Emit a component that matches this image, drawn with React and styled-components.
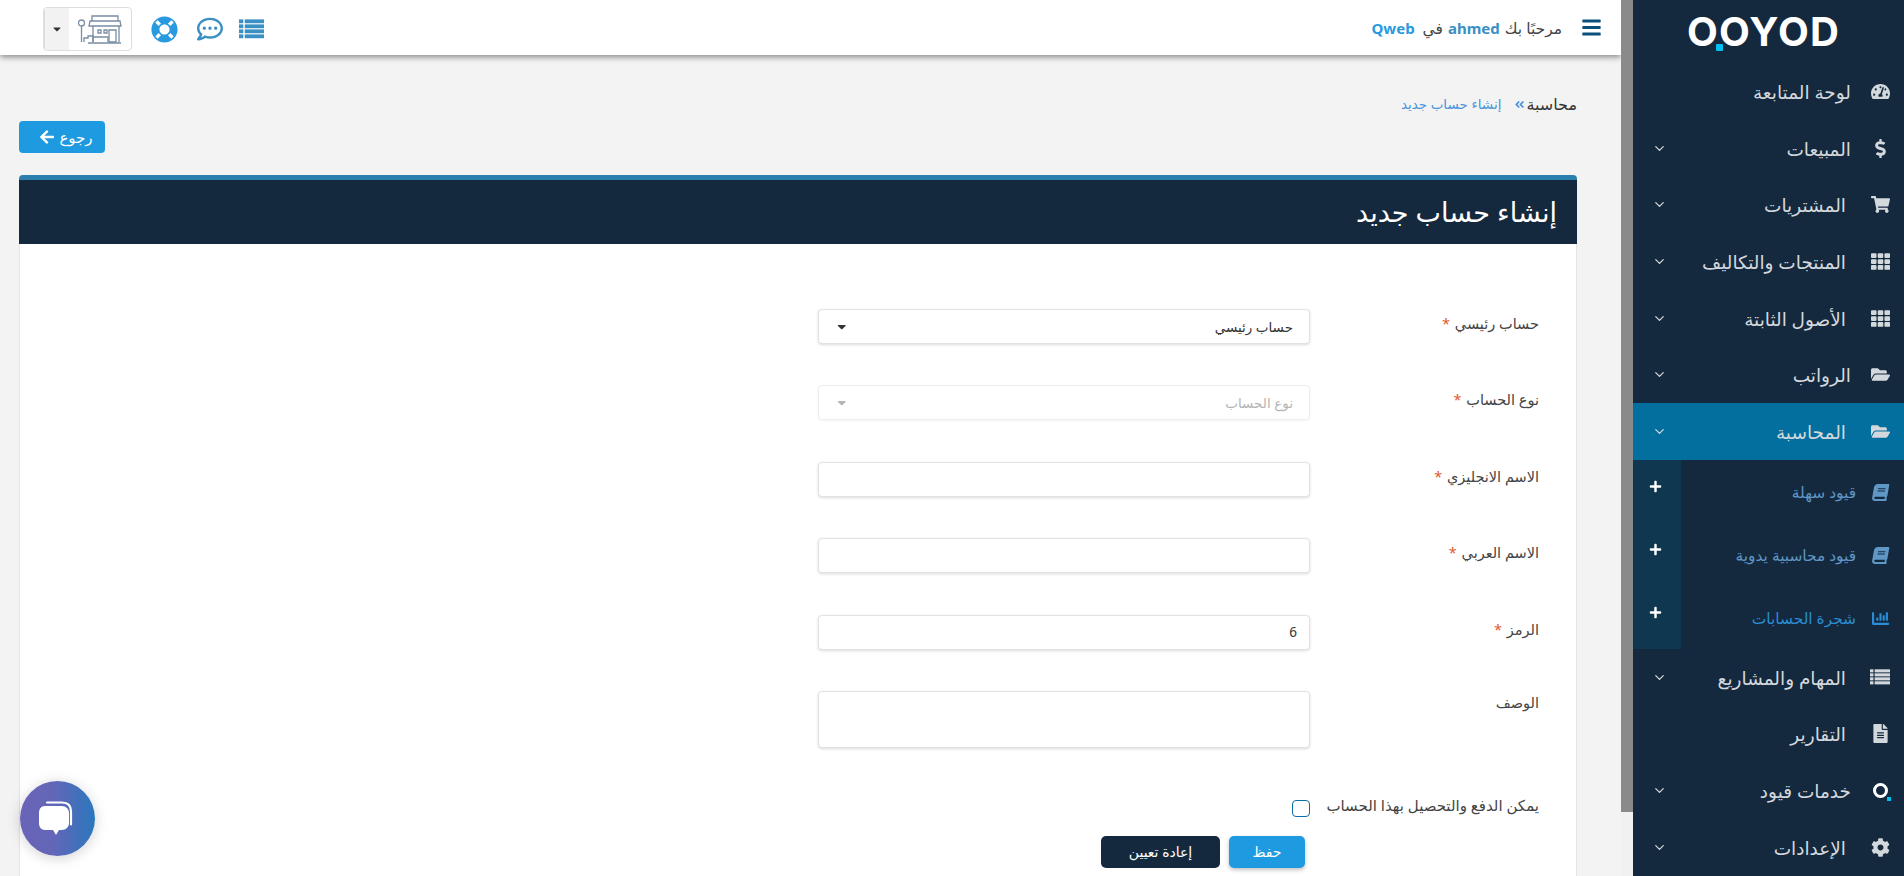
import React from "react";
import styled, { createGlobalStyle } from "styled-components";
import {
  FaTachometerAlt, FaDollarSign, FaShoppingCart, FaTh, FaFolderOpen, FaBook, FaChartBar,
  FaFileAlt, FaCog, FaPlus, FaBars, FaLifeRing, FaRegCommentDots, FaArrowLeft,
  FaAngleDoubleRight, FaCaretDown,
} from "react-icons/fa";
import { FiChevronDown } from "react-icons/fi";

const FONT = `"Noto Sans", "Open Sans", "DejaVu Sans", sans-serif`;

const Global = createGlobalStyle`
  html, body { margin: 0; padding: 0; height: 876px; overflow: hidden; background: #f3f3f3; }
  body { font-family: ${FONT}; color: #333; }
  * { box-sizing: border-box; }
`;

const Page = styled.div`
  display: flex;
  width: 1904px;
  height: 876px;
  overflow: hidden;
`;

const Sidebar = styled.aside`
  width: 271px;
  flex: none;
  background: #15293e;
  color: #d3d8dd;
`;

const Logo = styled.div`
  position: relative;
  height: 63px;
  display: flex;
  align-items: flex-start;
  justify-content: flex-start;
  padding: 9px 0 0 54px;
  direction: ltr;
  font: 700 40px/46px Inter, sans-serif;
  letter-spacing: 1.2px;
  color: #fff;
`;

const LogoDot = styled.span`
  position: absolute;
  left: 83px;
  top: 44px;
  width: 7px;
  height: 7px;
  border-radius: 1px;
  background: #00c2f0;
`;

const Row = styled.div`
  height: 56.7px;
  display: flex;
  align-items: center;
  padding: 0 14px 0 19px;
  font-size: 18.5px;
  background: ${(p) => (p.$active ? "#026f9f" : "transparent")};
`;

const RowIcon = styled.span`
  width: 20px;
  flex: none;
  display: flex;
  justify-content: center;
  margin-left: ${(p) => (p.$wide ? 24 : 19)}px;
  font-size: 19px;
  color: #d3d8dd;
`;

const RowLabel = styled.span`
  flex: 1;
  white-space: nowrap;
`;

const Chevron = styled(FiChevronDown)`
  font-size: 15px;
  color: #d3d8dd;
`;

const QMark = styled.span`
  position: relative;
  width: 15px;
  height: 15px;
  border: 3.5px solid #fff;
  border-radius: 50%;
  display: block;
  &::after {
    content: "";
    position: absolute;
    right: -6px;
    bottom: -6px;
    width: 4px;
    height: 4px;
    background: #00c2f0;
  }
`;

const SubMenu = styled.div`
  display: flex;
  flex-direction: column;
`;

const SubRow = styled.div`
  height: 63px;
  display: flex;
  padding-right: 14px;
  color: ${(p) => (p.$current ? "#2a8ed6" : "#5f97c6")};
  font-size: 15.4px;
`;

const SubIcon = styled.span`
  width: 20px;
  flex: none;
  margin-left: 14px;
  padding-top: 24px;
  font-size: 17px;
  display: flex;
  justify-content: center;
  align-items: flex-start;
`;

const SlantBook = styled(FaBook)`
  transform: skewX(-10deg);
`;

const SubLabel = styled.span`
  flex: 1;
  padding-top: 22px;
  white-space: nowrap;
`;

const PlusCell = styled.span`
  width: 48px;
  flex: none;
  background: #103750;
  color: #fff;
  display: flex;
  justify-content: center;
  padding: 20px 4px 0 0;
  font-size: 13px;
`;

const ScrollTrack = styled.div`
  width: 12px;
  flex: none;
  background: #f1f1f1;
`;

const ScrollThumb = styled.div`
  height: 812px;
  background: #8a8a8a;
`;

const Main = styled.main`
  flex: 1;
  min-width: 0;
  display: flex;
  flex-direction: column;
  overflow: hidden;
`;

const TopBar = styled.header`
  height: 55px;
  flex: none;
  background: #fff;
  box-shadow: 0 2px 6px rgba(0, 0, 0, 0.45);
  display: flex;
  align-items: center;
  justify-content: space-between;
  padding: 0 19px 0 43px;
  position: relative;
`;

const Welcome = styled.div`
  display: flex;
  align-items: center;
  gap: 19px;
`;

const Burger = styled(FaBars)`
  font-size: 21px;
  color: #0b5078;
`;

const WelcomeText = styled.div`
  font-size: 15.5px;
  color: #444;
  white-space: nowrap;
  display: flex;
  gap: 5px;
  align-items: baseline;
`;

const Strong = styled.b`
  color: ${(p) => p.$c};
  font-weight: 700;
  font-size: 15px;
  margin: 0 ${(p) => p.$m || 0}px;
`;

const Tools = styled.div`
  display: flex;
  align-items: center;
  gap: 19px;
  flex-direction: row-reverse;
  margin-top: 3px;
`;

const ToolIcon = styled.span`
  display: flex;
  font-size: ${(p) => p.$size}px;
  color: ${(p) => p.$c};
  margin-left: ${(p) => p.$pull || 0}px;
`;

const StoreSwitch = styled.div`
  width: 89px;
  height: 44px;
  border: 1px solid #ddd;
  border-radius: 4px;
  background: #fff;
  display: flex;
  flex-direction: row-reverse;
  overflow: hidden;
`;

const CaretBox = styled.span`
  width: 25px;
  background: #f2f2f2;
  border-left: 1px solid #ddd;
  display: flex;
  align-items: center;
  justify-content: center;
  font-size: 12px;
  color: #333;
`;

const StoreBox = styled.span`
  flex: 1;
  display: flex;
  align-items: center;
  justify-content: center;
`;

const Content = styled.div`
  flex: 1;
  padding: 39px 44px 0 19px;
  display: flex;
  flex-direction: column;
  min-height: 0;
`;

const Crumbs = styled.nav`
  height: 20px;
  display: flex;
  align-items: center;
  font-size: 16px;
  color: #333;
  gap: 1px;
`;

const CrumbLink = styled.span`
  color: #4a94dc;
  margin-right: 12px;
  font-size: 13.5px;
`;

const CrumbSep = styled(FaAngleDoubleRight)`
  color: #4a94dc;
  font-size: 11px;
  transform: rotate(180deg);
`;

const BackRow = styled.div`
  display: flex;
  justify-content: flex-end;
  margin-top: 7px;
  height: 32px;
`;

const BackButton = styled.button`
  width: 86px;
  height: 32px;
  border: 0;
  border-radius: 4px;
  background: #1e9be0;
  color: #fff;
  font: 15px ${FONT};
  display: flex;
  align-items: center;
  justify-content: center;
  gap: 4px;
  padding: 0 0 0 8px;
  svg {
    font-size: 16px;
  }
`;

const Card = styled.section`
  margin-top: 22px;
  flex: 1;
  display: flex;
  flex-direction: column;
  background: #fff;
  border-radius: 4px 4px 0 0;
  border-top: 5px solid #2a7fae;
  overflow: hidden;
`;

const CardHead = styled.h1`
  margin: 0;
  height: 64px;
  flex: none;
  background: #15293e;
  color: #fff;
  font-size: 27px;
  font-weight: 400;
  line-height: 64px;
  padding-right: 20px;
`;

const Form = styled.form`
  flex: 1;
  padding-top: 65px;
  border-left: 1px solid #e4e4e4;
  border-right: 1px solid #e4e4e4;
`;

const FormRow = styled.div`
  display: flex;
  min-height: 35px;
  margin-bottom: ${(p) => p.$mb ?? 41.4}px;
`;

const Label = styled.label`
  width: 266px;
  flex: none;
  padding: ${(p) => p.$pt ?? 4}px 37px 0 0;
  font-size: 14.5px;
  color: #444;
  white-space: nowrap;
`;

const Req = styled.span`
  color: #e2572f;
  margin-right: 1px;
`;

const SelectBox = styled.div`
  width: 492px;
  height: 35px;
  border: 1px solid ${(p) => (p.$disabled ? "#eee" : "#e2e2e2")};
  border-radius: 4px;
  box-shadow: 0 1px 3px rgba(0, 0, 0, ${(p) => (p.$disabled ? 0.05 : 0.14)});
  padding: 0 16px;
  display: flex;
  align-items: center;
  justify-content: space-between;
  font-size: 13.5px;
  color: ${(p) => (p.$disabled ? "#b5b5b5" : "#333")};
  background: #fff;
`;

const Input = styled.input`
  width: 492px;
  height: 35px;
  border: 1px solid #e2e2e2;
  border-radius: 4px;
  box-shadow: 0 1px 3px rgba(0, 0, 0, 0.14);
  padding: 0 16px 0 12px;
  padding-right: 12px;
  font: 13.5px ${FONT};
  color: #333;
  outline: 0;
  background: #fff;
`;

const TextArea = styled.textarea`
  width: 492px;
  height: 57px;
  border: 1px solid #e2e2e2;
  border-radius: 4px;
  box-shadow: 0 1px 3px rgba(0, 0, 0, 0.14);
  resize: none;
  outline: 0;
  display: block;
`;

const CheckRow = styled.div`
  display: flex;
  height: 22px;
  margin-top: 47px;
  padding-right: 37px;
  justify-content: flex-start;
`;

const CheckLabel = styled.label`
  width: 229px;
  font-size: 15px;
  color: #444;
  white-space: nowrap;
`;

const Check = styled.input`
  appearance: none;
  width: 18px;
  height: 17px;
  border: 1px solid #0b6ea6;
  border-radius: 4px;
  margin: 5px 0 0;
  background: #fff;
`;

const Actions = styled.div`
  display: flex;
  gap: 9px;
  margin-top: 19px;
  padding-right: 271px;
`;

const ActionButton = styled.button`
  height: 32px;
  width: ${(p) => p.$w}px;
  border: 0;
  border-radius: 5px;
  background: ${(p) => p.$bg};
  color: #fff;
  font: 14px ${FONT};
  box-shadow: ${(p) => (p.$shadow ? "0 2px 4px rgba(0,0,0,.25)" : "none")};
`;

const ChatFab = styled.div`
  position: fixed;
  left: 20px;
  top: 781px;
  width: 75px;
  height: 75px;
  border-radius: 50%;
  background: linear-gradient(90deg, #6a64b8 0%, #6366b8 45%, #2a78bd 100%);
  box-shadow: 0 2px 14px rgba(0, 0, 0, 0.18);
  display: flex;
  align-items: center;
  justify-content: center;
`;

const Store = () => (
  <svg width="44" height="30" viewBox="0 0 44 30" fill="none" stroke="#7a8da3" strokeWidth="1.3">
    <circle cx="3.5" cy="9" r="3" />
    <path d="M3.5 12V28" />
    <path d="M14 2h26v5H14zM12 7h30l1 5H11z" />
    <path d="M15 12v16M41 12v16M10 29h33" />
    <path d="M20 16h3v3h-3zM26 16h3v3h-3zM31 16h7v12h-7z" />
    <path d="M6 28v-4h4v-2h5v6M15 23h15v5" />
  </svg>
);

const ListGlyph = ({ w, h }) => (
  <svg width={w} height={h} viewBox="0 0 26 20" fill="currentColor">
    {[0, 5.2, 10.4, 15.6].map((y) => (
      <g key={y}>
        <rect x="0" y={y} width="4.5" height="4" />
        <rect x="6" y={y} width="20" height="4" />
      </g>
    ))}
  </svg>
);

const Bubbles = () => (
  <svg width="40" height="40" viewBox="0 0 40 40">
    <path d="M9 3.5h15c6 0 9 3 9 9v13" fill="none" stroke="#fff" strokeWidth="2.2" strokeLinecap="round" />
    <path d="M7 7h17c4 0 7 3 7 7v10c0 4-3 7-7 7h-3l-3 5-3-5H7c-4 0-6-3-6-7V14c0-4 2-7 6-7z" fill="#fff" />
  </svg>
);

const menuTop = [
  { t: "لوحة المتابعة", i: <FaTachometerAlt /> },
  { t: "المبيعات", i: <FaDollarSign />, c: 1 },
  { t: "المشتريات", i: <FaShoppingCart />, c: 1, w: 1 },
  { t: "المنتجات والتكاليف", i: <FaTh />, c: 1, w: 1 },
  { t: "الأصول الثابتة", i: <FaTh />, c: 1, w: 1 },
  { t: "الرواتب", i: <FaFolderOpen />, c: 1 },
  { t: "المحاسبة", i: <FaFolderOpen />, c: 1, w: 1, a: 1 },
];
const menuSub = [
  { t: "قيود سهلة", i: <SlantBook /> },
  { t: "قيود محاسبية يدوية", i: <SlantBook /> },
  { t: "شجرة الحسابات", i: <FaChartBar />, cur: 1 },
];
const menuBottom = [
  { t: "المهام والمشاريع", i: <ListGlyph w={20} h={16} />, c: 1, w: 1 },
  { t: "التقارير", i: <FaFileAlt />, w: 1 },
  { t: "خدمات قيود", i: <QMark />, c: 1 },
  { t: "الإعدادات", i: <FaCog />, c: 1, w: 1 },
];

const MenuRow = ({ m }) => (
  <Row $active={m.a}>
    <RowIcon $wide={m.w}>{m.i}</RowIcon>
    <RowLabel>{m.t}</RowLabel>
    {m.c ? <Chevron /> : null}
  </Row>
);

export default function App() {
  return (
    <>
      <Global />
      <Page dir="rtl">
        <Sidebar>
          <Logo>
            OOYOD
            <LogoDot />
          </Logo>
          {menuTop.map((m) => <MenuRow key={m.t} m={m} />)}
          <SubMenu>
            {menuSub.map((m) => (
              <SubRow key={m.t} $current={m.cur}>
                <SubIcon>{m.i}</SubIcon>
                <SubLabel>{m.t}</SubLabel>
                <PlusCell><FaPlus /></PlusCell>
              </SubRow>
            ))}
          </SubMenu>
          {menuBottom.map((m) => <MenuRow key={m.t} m={m} />)}
        </Sidebar>
        <ScrollTrack><ScrollThumb /></ScrollTrack>
        <Main>
          <TopBar>
            <Welcome>
              <Burger />
              <WelcomeText>
                مرحبًا بك <Strong $c="#3a8fc4">ahmed</Strong> في <Strong $c="#2a9ae0" $m={3}>Qweb</Strong>
              </WelcomeText>
            </Welcome>
            <Tools>
              <StoreSwitch>
                <CaretBox><FaCaretDown /></CaretBox>
                <StoreBox><Store /></StoreBox>
              </StoreSwitch>
              <ToolIcon $size={27} $c="#2a9ae0"><FaLifeRing /></ToolIcon>
              <ToolIcon $size={26} $c="#3a8fc4"><FaRegCommentDots /></ToolIcon>
              <ToolIcon $c="#3a8fc4" $pull={-3}><ListGlyph w={25} h={20} /></ToolIcon>
            </Tools>
          </TopBar>
          <Content>
            <Crumbs>
              <span>محاسبة</span>
              <CrumbSep />
              <CrumbLink>إنشاء حساب جديد</CrumbLink>
            </Crumbs>
            <BackRow>
              <BackButton type="button">رجوع <FaArrowLeft /></BackButton>
            </BackRow>
            <Card>
              <CardHead>إنشاء حساب جديد</CardHead>
              <Form>
                <FormRow>
                  <Label>حساب رئيسي <Req>*</Req></Label>
                  <SelectBox>حساب رئيسي <FaCaretDown /></SelectBox>
                </FormRow>
                <FormRow>
                  <Label>نوع الحساب <Req>*</Req></Label>
                  <SelectBox $disabled>نوع الحساب <FaCaretDown /></SelectBox>
                </FormRow>
                <FormRow>
                  <Label>الاسم الانجليزي <Req>*</Req></Label>
                  <Input />
                </FormRow>
                <FormRow>
                  <Label>الاسم العربي <Req>*</Req></Label>
                  <Input />
                </FormRow>
                <FormRow>
                  <Label>الرمز <Req>*</Req></Label>
                  <Input defaultValue="6" />
                </FormRow>
                <FormRow $mb={0}>
                  <Label $pt={1}>الوصف</Label>
                  <TextArea />
                </FormRow>
                <CheckRow>
                  <CheckLabel>يمكن الدفع والتحصيل بهذا الحساب</CheckLabel>
                  <Check type="checkbox" />
                </CheckRow>
                <Actions>
                  <ActionButton type="button" $w={76} $bg="#1e9be0" $shadow>حفظ</ActionButton>
                  <ActionButton type="button" $w={119} $bg="#15293e">إعادة تعيين</ActionButton>
                </Actions>
              </Form>
            </Card>
          </Content>
        </Main>
      </Page>
      <ChatFab><Bubbles /></ChatFab>
    </>
  );
}
